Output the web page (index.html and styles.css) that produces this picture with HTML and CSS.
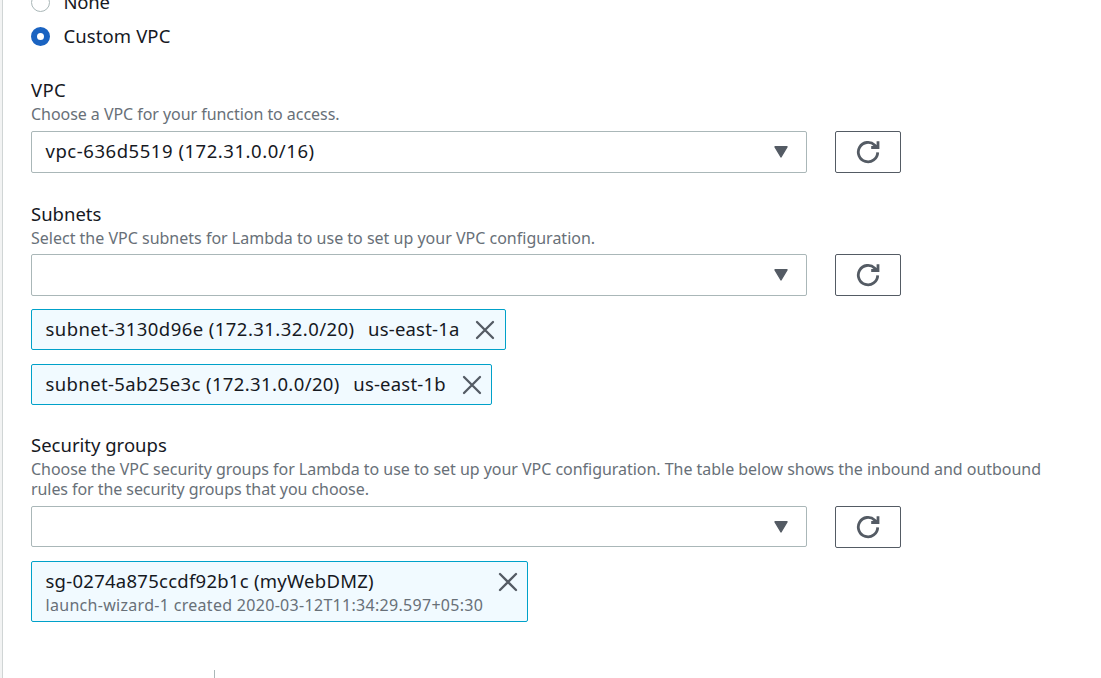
FILE: index.html
```html
<!DOCTYPE html>
<html lang="en">
<head>
<meta charset="utf-8">
<title>VPC configuration</title>
<link rel="stylesheet" href="styles.css">
</head>
<body>
<svg class="symbols" aria-hidden="true">
  <symbol id="refresh" viewBox="0 0 24 24"><path d="M21.7 12.4A9.7 9.7 0 1 1 18.8 5.2L21 7.4M22 1.3V7.5H15.2" fill="none" stroke="#545b64" stroke-width="2.8"/></symbol>
  <symbol id="close" viewBox="0 0 20 20"><path d="M2 2L18 18M18 2L2 18" fill="none" stroke="#545b64" stroke-width="2.3" stroke-linecap="round"/></symbol>
  <symbol id="caret" viewBox="0 0 14 12"><path d="M1 .8H13L7 11Z" fill="#545b64" stroke="#545b64" stroke-width="1.4" stroke-linejoin="round"/></symbol>
</svg>
<main class="panel">
  <div class="radios">
    <div class="radio"><span class="dot"></span><span class="text t-none">None</span></div>
    <div class="radio"><span class="dot dot-on"></span><span class="text t-custom">Custom VPC</span></div>
  </div>
  <section class="field field-vpc">
    <h3 class="label t-vpc">VPC</h3>
    <p class="hint"><span class="h-vpc">Choose a VPC for your function to access.</span></p>
    <div class="controls">
      <div class="select"><span class="text t-select">vpc-636d5519 (172.31.0.0/16)</span><svg class="caret"><use href="#caret"/></svg></div>
      <button class="refresh" aria-label="Refresh"><svg class="icon"><use href="#refresh"/></svg></button>
    </div>
  </section>
  <section class="field field-subnets">
    <h3 class="label t-subnets">Subnets</h3>
    <p class="hint"><span class="h-subnets">Select the VPC subnets for Lambda to use to set up your VPC configuration.</span></p>
    <div class="controls">
      <div class="select"><span></span><svg class="caret"><use href="#caret"/></svg></div>
      <button class="refresh" aria-label="Refresh"><svg class="icon"><use href="#refresh"/></svg></button>
    </div>
    <div class="tokens">
      <div class="token token-a"><span class="text t-a">subnet-3130d96e (172.31.32.0/20)</span><span class="text t-zone">us-east-1a</span><svg class="close"><use href="#close"/></svg></div>
      <div class="token token-b"><span class="text t-b">subnet-5ab25e3c (172.31.0.0/20)</span><span class="text t-zone">us-east-1b</span><svg class="close"><use href="#close"/></svg></div>
    </div>
  </section>
  <section class="field field-groups">
    <h3 class="label t-groups">Security groups</h3>
    <p class="hint"><span class="h-g1">Choose the VPC security groups for Lambda to use to set up your VPC configuration. The table below shows the inbound and outbound</span><br><span class="h-g2">rules for the security groups that you choose.</span></p>
    <div class="controls">
      <div class="select select-short"><span></span><svg class="caret"><use href="#caret"/></svg></div>
      <button class="refresh" aria-label="Refresh"><svg class="icon"><use href="#refresh"/></svg></button>
    </div>
    <div class="token token-group">
      <div class="lines"><span class="text t-sg">sg-0274a875ccdf92b1c (myWebDMZ)</span><span class="sub">launch-wizard-1 created 2020-03-12T11:34:29.597+05:30</span></div>
      <svg class="close"><use href="#close"/></svg>
    </div>
  </section>
  <div class="tab-divider"></div>
</main>
</body>
</html>
```
FILE: styles.css
```css
* { box-sizing: border-box; }
body { margin: 0; height: 678px; overflow: hidden; background: #f2f3f3; font-family: "Noto Sans", sans-serif; font-size: 18.5px; color: #16191f; }
.symbols { display: none; }
.panel { height: 678px; margin-left: 2px; padding-left: 28px; border-left: 1px solid #d0d5d5; background: #fff; overflow: hidden; }
.radios { display: flex; flex-direction: column; gap: 11px; margin-top: -9px; }
.radio { display: flex; align-items: center; gap: 13.5px; height: 23px; }
.dot { width: 19px; height: 19px; border: 1px solid #aab7b8; border-radius: 50%; background: #fff; }
.dot-on { border: 6px solid #1a63c1; }
.text, .label, .hint, .sub { white-space: nowrap; }
.text { padding-bottom: 2px; line-height: 22px; }
.t-none { letter-spacing: -.2px; }
.t-custom { letter-spacing: .1px; }
.t-select { letter-spacing: .54px; }
.t-a { letter-spacing: .44px; }
.t-b { letter-spacing: .38px; }
.t-sg { letter-spacing: .26px; }
.t-vpc { letter-spacing: .3px; }
.h-vpc { letter-spacing: -.05px; }
.h-g1 { letter-spacing: -.033px; }
.h-g2 { letter-spacing: -.07px; }
.field-vpc { margin-top: 31px; }
.field-subnets { margin-top: 30px; }
.field-groups { margin-top: 29px; }
.label { margin: 0; padding-bottom: 2px; font-size: 18.5px; font-weight: 400; line-height: 22px; }
.hint { margin: 1px 0 6px; font-size: 16px; line-height: 20px; color: #687078; }
.field-vpc .hint, .field-groups .hint { margin-bottom: 7px; }
.controls { display: flex; gap: 28px; }
.select { display: flex; align-items: center; justify-content: space-between; width: 776px; height: 42px; padding: 0 18px 0 13.5px; border: 1px solid #aab7b8; border-radius: 2px; }
.select-short { height: 41px; }
.caret { width: 14px; height: 12px; }
.refresh { display: flex; align-items: center; justify-content: center; width: 66px; height: 42px; padding: 0; border: 1px solid #545b64; border-radius: 2px; background: #fff; }
.icon { width: 24px; height: 24px; }
.tokens { display: flex; flex-direction: column; gap: 14px; margin-top: 13px; }
.token { display: flex; align-items: center; height: 41px; padding: 0 10px 0 13.5px; border: 1px solid #00a1c9; border-radius: 2px; background: #f1faff; }
.token-a { width: 475px; }
.token-b { width: 461px; padding-right: 9px; }
.t-zone { margin-left: 13.5px; letter-spacing: .2px; }
.close { width: 20px; height: 20px; margin-left: auto; flex: none; }
.token-group { width: 497px; height: 61px; margin-top: 13px; padding: 8px 9px 0 13.5px; align-items: flex-start; }
.token-group .close { margin-top: 2px; }
.lines { display: flex; flex-direction: column; }
.sub { padding-bottom: 2px; font-size: 16px; line-height: 22px; letter-spacing: .3px; color: #687078; }
.tab-divider { width: 1px; height: 8px; margin: 48px 0 0 183px; background: #aab7b8; }
```
